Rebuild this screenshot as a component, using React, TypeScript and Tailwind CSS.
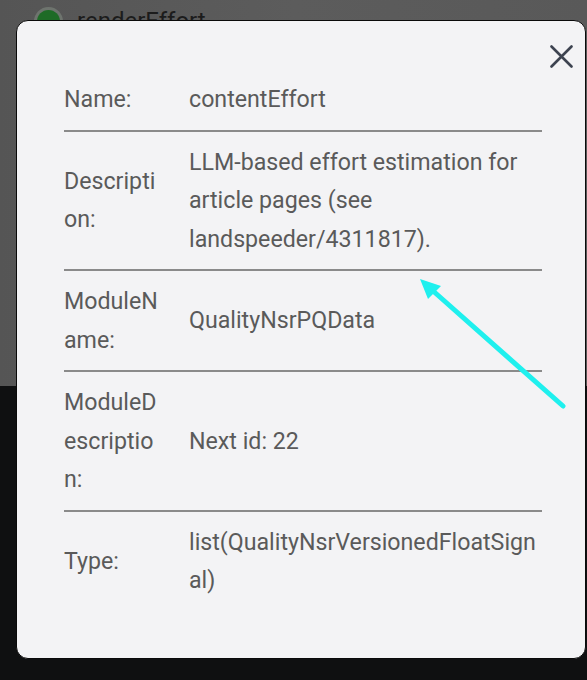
const rows: { label: string; value: string }[] = [
  { label: "Name:", value: "contentEffort" },
  {
    label: "Description:",
    value: "LLM-based effort estimation for article pages (see landspeeder/4311817).",
  },
  { label: "ModuleName:", value: "QualityNsrPQData" },
  { label: "ModuleDescription:", value: "Next id: 22" },
  { label: "Type:", value: "list(QualityNsrVersionedFloatSignal)" },
];

export default function App() {
  return (
    <div
      className="relative h-[680px] w-[587px] overflow-hidden bg-[#0f1011]"
      style={{ fontFamily: "Roboto, 'Noto Sans', sans-serif" }}
    >
      {/* page behind the dialog */}
      <div className="h-[386px] bg-gradient-to-r from-[#555] via-[#5c5c5c] to-[#595959] px-[34px] pt-[3px]">
        <div className="flex items-center gap-[14px]">
          <div className="flex h-[29px] w-[29px] items-center justify-center rounded-full bg-[#6e746e]">
            <div className="h-[23px] w-[23px] rounded-full bg-[#1e6b26]" />
          </div>
          <span className="text-[24px] text-[#1c1c1c]">renderEffort</span>
        </div>
      </div>

      {/* dialog */}
      <div className="absolute left-[16px] top-[20px] h-[639px] w-[570px] rounded-[12px] border border-[#0a0a0a] bg-[#f3f3f5] pl-[47px] pr-[43px] pt-[48px]">
        <button className="absolute right-[12px] top-[24px] text-[#3d4350]">
          <svg width="23" height="23" viewBox="0 0 23 23">
            <path
              d="M1.5 1.5 L21.5 21.5 M21.5 1.5 L1.5 21.5"
              stroke="currentColor"
              strokeWidth="2.6"
              strokeLinecap="round"
            />
          </svg>
        </button>
        <div className="flex flex-col text-[23.2px] leading-[38.5px] text-[#5a5a5a]">
          {rows.map((r, i) => (
            <div
              key={r.label}
              className={
                "grid grid-cols-[97px_1fr] items-center gap-[28px] py-[11px] " +
                (i < rows.length - 1 ? "border-b-2 border-[#8a8a8a]" : "")
              }
            >
              <div className="min-w-0 [overflow-wrap:anywhere]">{r.label}</div>
              <div className="min-w-0 pr-[2px] [overflow-wrap:anywhere]">{r.value}</div>
            </div>
          ))}
        </div>
      </div>

      {/* annotation arrow */}
      <svg
        className="absolute left-0 top-0"
        width="587"
        height="680"
        viewBox="0 0 587 680"
      >
        <line
          x1="563"
          y1="406"
          x2="432"
          y2="290"
          stroke="#1ff0ee"
          strokeWidth="5"
          strokeLinecap="round"
        />
        <polygon points="420,279 441,286 428,299" fill="#1ff0ee" />
      </svg>
    </div>
  );
}
